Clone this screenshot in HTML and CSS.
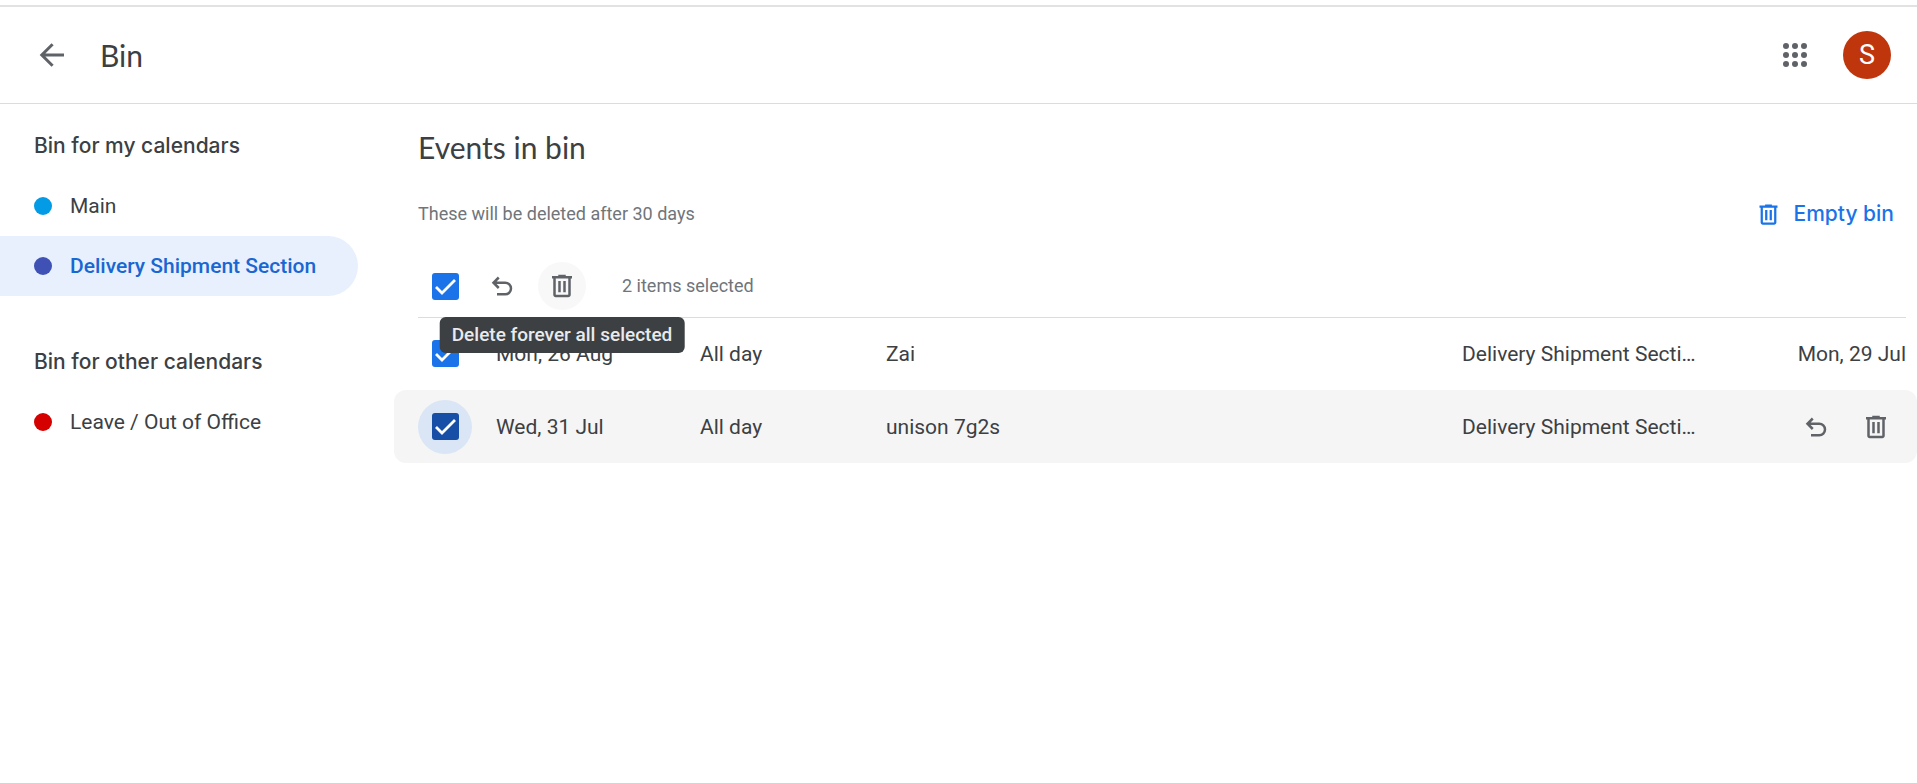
FILE: index.html
```html
<!DOCTYPE html>
<html lang="en-GB">
<head>
<meta charset="utf-8">
<meta name="viewport" content="width=device-width, initial-scale=1">
<title>Bin</title>
<link rel="stylesheet" href="styles.css">
</head>
<body>
<svg class="sprite" aria-hidden="true">
  <symbol id="trash" viewBox="0 0 24 24"><path d="M15 4V3H9v1H4v2h1v13c0 1.1.9 2 2 2h10c1.1 0 2-.9 2-2V6h1V4h-5zm2 15H7V6h10v13zM9 8h2v9H9zM13 8h2v9h-2z"/></symbol>
  <symbol id="undo" viewBox="0 0 24 24"><path d="M9.4 5.2 5.2 9.4l4.2 4.2M5.2 9.4h9.4a4.6 4.6 0 0 1 0 9.2H8" fill="none" stroke="currentColor" stroke-width="2"/></symbol>
</svg>
<header class="header">
  <button class="icon-button" aria-label="Back">
    <svg class="icon-large" viewBox="0 0 24 24"><path d="M5.2 12H20M12.4 4.8 5.2 12l7.2 7.2" fill="none" stroke="currentColor" stroke-width="2"/></svg>
  </button>
  <h1 class="title header-title">Bin</h1>
  <button class="icon-button" aria-label="Apps">
    <svg class="icon-large" viewBox="0 0 24 24"><circle cx="6" cy="6" r="2"/><circle cx="12" cy="6" r="2"/><circle cx="18" cy="6" r="2"/><circle cx="6" cy="12" r="2"/><circle cx="12" cy="12" r="2"/><circle cx="18" cy="12" r="2"/><circle cx="6" cy="18" r="2"/><circle cx="12" cy="18" r="2"/><circle cx="18" cy="18" r="2"/></svg>
  </button>
  <button class="avatar" aria-label="Account">S</button>
</header>
<div class="layout">
  <nav class="sidebar">
    <h2 class="group-title">Bin for my calendars</h2>
    <a class="calendar" href="#main"><span class="dot dot-blue"></span>Main</a>
    <a class="calendar calendar-active" href="#delivery" aria-current="page"><span class="dot dot-indigo"></span>Delivery Shipment Section</a>
    <h2 class="group-title group-later">Bin for other calendars</h2>
    <a class="calendar" href="#leave"><span class="dot dot-red"></span>Leave / Out of Office</a>
  </nav>
  <main class="content">
    <div class="intro">
      <h2 class="title">Events in bin</h2>
      <div class="notice">
        <p class="muted">These will be deleted after 30 days</p>
        <button class="empty"><svg class="icon-small"><use href="#trash"/></svg>Empty bin</button>
      </div>
      <div class="toolbar">
        <span class="check"><input type="checkbox" aria-label="Select all" checked></span>
        <button class="icon-button" aria-label="Restore all selected"><svg class="icon"><use href="#undo"/></svg></button>
        <div class="tip-anchor">
          <button class="icon-button hovered" aria-labelledby="tip"><svg class="icon"><use href="#trash"/></svg></button>
          <span class="tooltip" id="tip" role="tooltip">Delete forever all selected</span>
        </div>
        <span class="muted count">2 items selected</span>
      </div>
    </div>
    <table class="events">
      <colgroup><col class="col-check"><col class="col-date"><col class="col-time"><col><col class="col-calendar"><col class="col-deleted"></colgroup>
      <tbody>
        <tr>
          <td><span class="check"><input type="checkbox" aria-label="Select Zai" checked></span></td>
          <td>Mon, 26 Aug</td><td>All day</td><td>Zai</td>
          <td title="Delivery Shipment Section">Delivery Shipment Secti…</td>
          <td class="deleted">Mon, 29 Jul</td>
        </tr>
        <tr class="row-hover">
          <td><span class="check check-focus"><input type="checkbox" aria-label="Select unison 7g2s" checked></span></td>
          <td>Wed, 31 Jul</td><td>All day</td><td>unison 7g2s</td>
          <td title="Delivery Shipment Section">Delivery Shipment Secti…</td>
          <td><div class="actions">
            <button class="icon-button" aria-label="Restore"><svg class="icon"><use href="#undo"/></svg></button>
            <button class="icon-button" aria-label="Delete forever"><svg class="icon"><use href="#trash"/></svg></button>
          </div></td>
        </tr>
      </tbody>
    </table>
  </main>
</div>
</body>
</html>
```
FILE: styles.css
```css
* { box-sizing: border-box; }
body {
  margin: 0;
  padding-top: 5px;
  background: #fff;
  color: #3c4043;
  font: 21px/30px Roboto, sans-serif;
}
h1, h2, p { margin: 0; font-weight: 400; }
button {
  padding: 0;
  border: 0;
  background: none;
  color: #5f6368;
  font: inherit;
  cursor: pointer;
}
svg { display: block; fill: currentColor; }
.sprite { position: absolute; width: 0; height: 0; }
.icon { width: 30px; height: 30px; }
.icon-small { width: 27px; height: 27px; }
.icon-large { width: 36px; height: 36px; }

.header {
  display: flex;
  align-items: center;
  height: 99px;
  padding: 0 26px 0 28px;
  border-top: 2px solid #e2e2e2;
  border-bottom: 1px solid #dadce0;
}
.title { font: 30px/36px Lato, sans-serif; }
.header-title { flex: 1; margin-left: 24px; }
.icon-button {
  display: flex;
  flex: none;
  align-items: center;
  justify-content: center;
  width: 48px;
  height: 48px;
  border-radius: 50%;
}
.hovered { background: #f8f8f8; }
.avatar {
  width: 48px;
  height: 48px;
  margin-left: 24px;
  border-radius: 50%;
  background: #bf360c;
  color: #fff;
  font-size: 27px;
}

.layout { display: flex; }
.sidebar { flex: none; width: 358px; margin-right: 36px; padding-top: 12px; }
.group-title { padding-left: 34px; font: 500 21px/60px Inter, sans-serif; }
.group-later { margin-top: 36px; }
.calendar {
  display: flex;
  align-items: center;
  gap: 18px;
  height: 60px;
  padding-left: 34px;
  border-radius: 0 30px 30px 0;
  color: inherit;
  text-decoration: none;
}
.calendar-active { background: #e8f0fe; color: #1967d2; font-weight: 500; }
.dot { width: 18px; height: 18px; border-radius: 50%; }
.dot-blue { background: #039be5; }
.dot-indigo { background: #3f51b5; }
.dot-red { background: #d50000; }

.content { flex: 1; min-width: 0; }
.intro { padding: 25px 11px 0 24px; }
.notice {
  display: flex;
  align-items: center;
  justify-content: space-between;
  margin-top: 25px;
  padding-right: 12px;
  height: 48px;
}
.muted { color: #70757a; font-size: 18px; }
.empty {
  display: flex;
  align-items: center;
  gap: 12px;
  color: #1a73e8;
  font: 500 21px/30px Inter, sans-serif;
}
.toolbar {
  display: flex;
  align-items: center;
  height: 63px;
  margin-top: 17px;
  border-bottom: 1px solid #dadce0;
}
.toolbar .check { margin-right: 6px; }
.tip-anchor { position: relative; margin-left: 12px; }
.tooltip {
  position: absolute;
  z-index: 1;
  top: 55px;
  left: 50%;
  transform: translateX(-50%);
  padding: 3px 12px;
  border-radius: 6px;
  background: #3c4043;
  color: #e8eaed;
  font-size: 19px;
  font-weight: 500;
  white-space: nowrap;
}
.count { margin-left: 36px; }

.check {
  display: flex;
  flex: none;
  align-items: center;
  justify-content: center;
  width: 54px;
  height: 54px;
  border-radius: 50%;
}
.check input {
  width: 27px;
  height: 27px;
  margin: 0;
  border-radius: 3px;
  appearance: none;
  background: #1a73e8 url("data:image/svg+xml,%3Csvg xmlns='http://www.w3.org/2000/svg' viewBox='0 0 27 27'%3E%3Cpath d='M4 14l6 6L23 7' fill='none' stroke='white' stroke-width='2.8'/%3E%3C/svg%3E");
}
.check-focus { background: #dae6f5; }
.check-focus input { background-color: #174ea6; }

.events { width: 100%; margin-top: -1px; border-collapse: collapse; table-layout: fixed; }
.col-check { width: 102px; }
.col-date { width: 204px; }
.col-time { width: 186px; }
.col-calendar { width: 236px; }
.col-deleted { width: 219px; }
td { height: 73px; padding: 0; white-space: nowrap; }
td:first-child { padding-left: 24px; border-radius: 12px 0 0 12px; }
td:last-child { border-radius: 0 12px 12px 0; }
.row-hover td { background: #f5f5f5; }
td.deleted { padding-right: 11px; text-align: right; }
.actions { display: flex; justify-content: flex-end; gap: 12px; padding-right: 17px; }
```
